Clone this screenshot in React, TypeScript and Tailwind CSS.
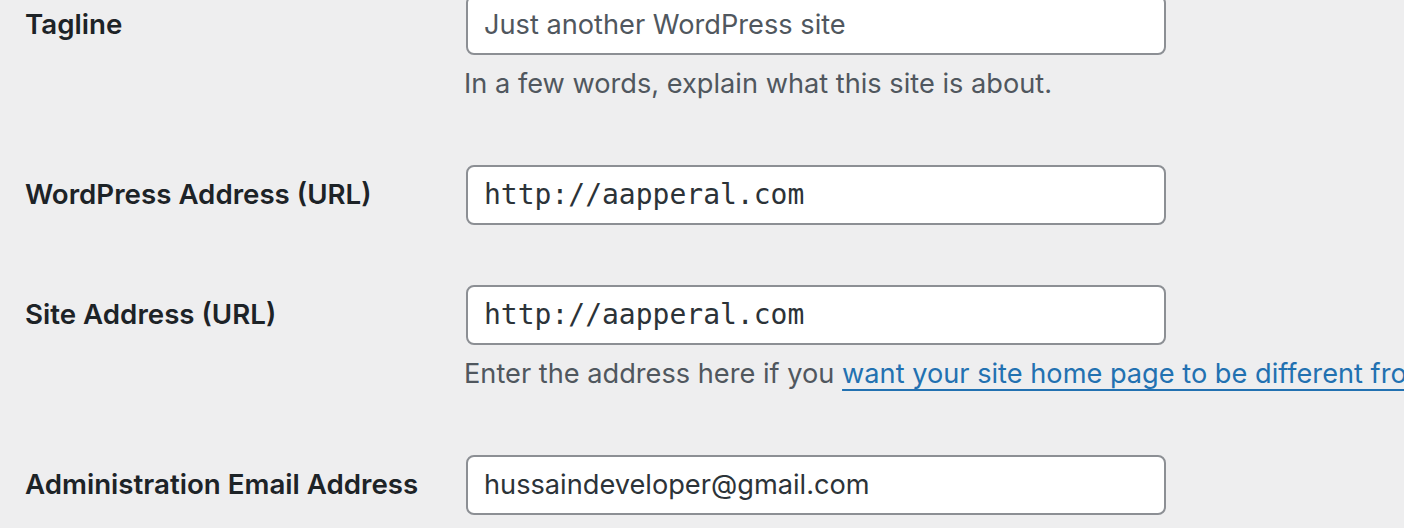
const sans = 'font-["Inter","Noto_Sans",sans-serif]';

type Row = {
  label: string;
  value: string;
  mono?: boolean;
  placeholder?: boolean;
  description?: React.ReactNode;
};

const rows: Row[] = [
  {
    label: 'Tagline',
    value: 'Just another WordPress site',
    placeholder: true,
    description: 'In a few words, explain what this site is about.',
  },
  { label: 'WordPress Address (URL)', value: 'http://aapperal.com', mono: true },
  {
    label: 'Site Address (URL)',
    value: 'http://aapperal.com',
    mono: true,
    description: (
      <>
        Enter the address here if you{' '}
        <a
          href="#"
          className="text-[#2271b1] underline decoration-[2px] underline-offset-[6px] [text-decoration-skip-ink:none]"
        >
          want your site home page to be different from your WordPress installation directory
        </a>
        .
      </>
    ),
  },
  { label: 'Administration Email Address', value: 'hussaindeveloper@gmail.com' },
];

const SettingRow = ({ row }: { row: Row }) => (
  <div className="flex py-[30px]">
    <div className="flex h-[60px] w-[441px] shrink-0 items-center text-[27.7px] font-semibold text-[#1d2327]">
      {row.label}
    </div>
    <div className="min-w-0">
      <div
        className={`flex h-[60px] w-[700px] items-center rounded-[8px] border-2 border-[#8c8f94] bg-white px-4 ${
          row.mono ? 'font-["DejaVu_Sans_Mono",monospace] text-[28px]' : 'text-[27.2px]'
        } ${row.placeholder ? 'text-[#50575e]' : 'text-[#2c3338]'}`}
      >
        {row.value}
      </div>
      {row.description && (
        <p className="-ml-[2px] mt-2 whitespace-nowrap text-[27.2px] leading-[42px] text-[#50575e]">
          {row.description}
        </p>
      )}
    </div>
  </div>
);

export default function App() {
  return (
    <div className={`h-[528px] w-[1404px] overflow-hidden bg-[#eeeeef] ${sans}`}>
      <div className="-mt-[35px] pl-[25px]">
        {rows.map((row) => (
          <SettingRow key={row.label} row={row} />
        ))}
      </div>
    </div>
  );
}
